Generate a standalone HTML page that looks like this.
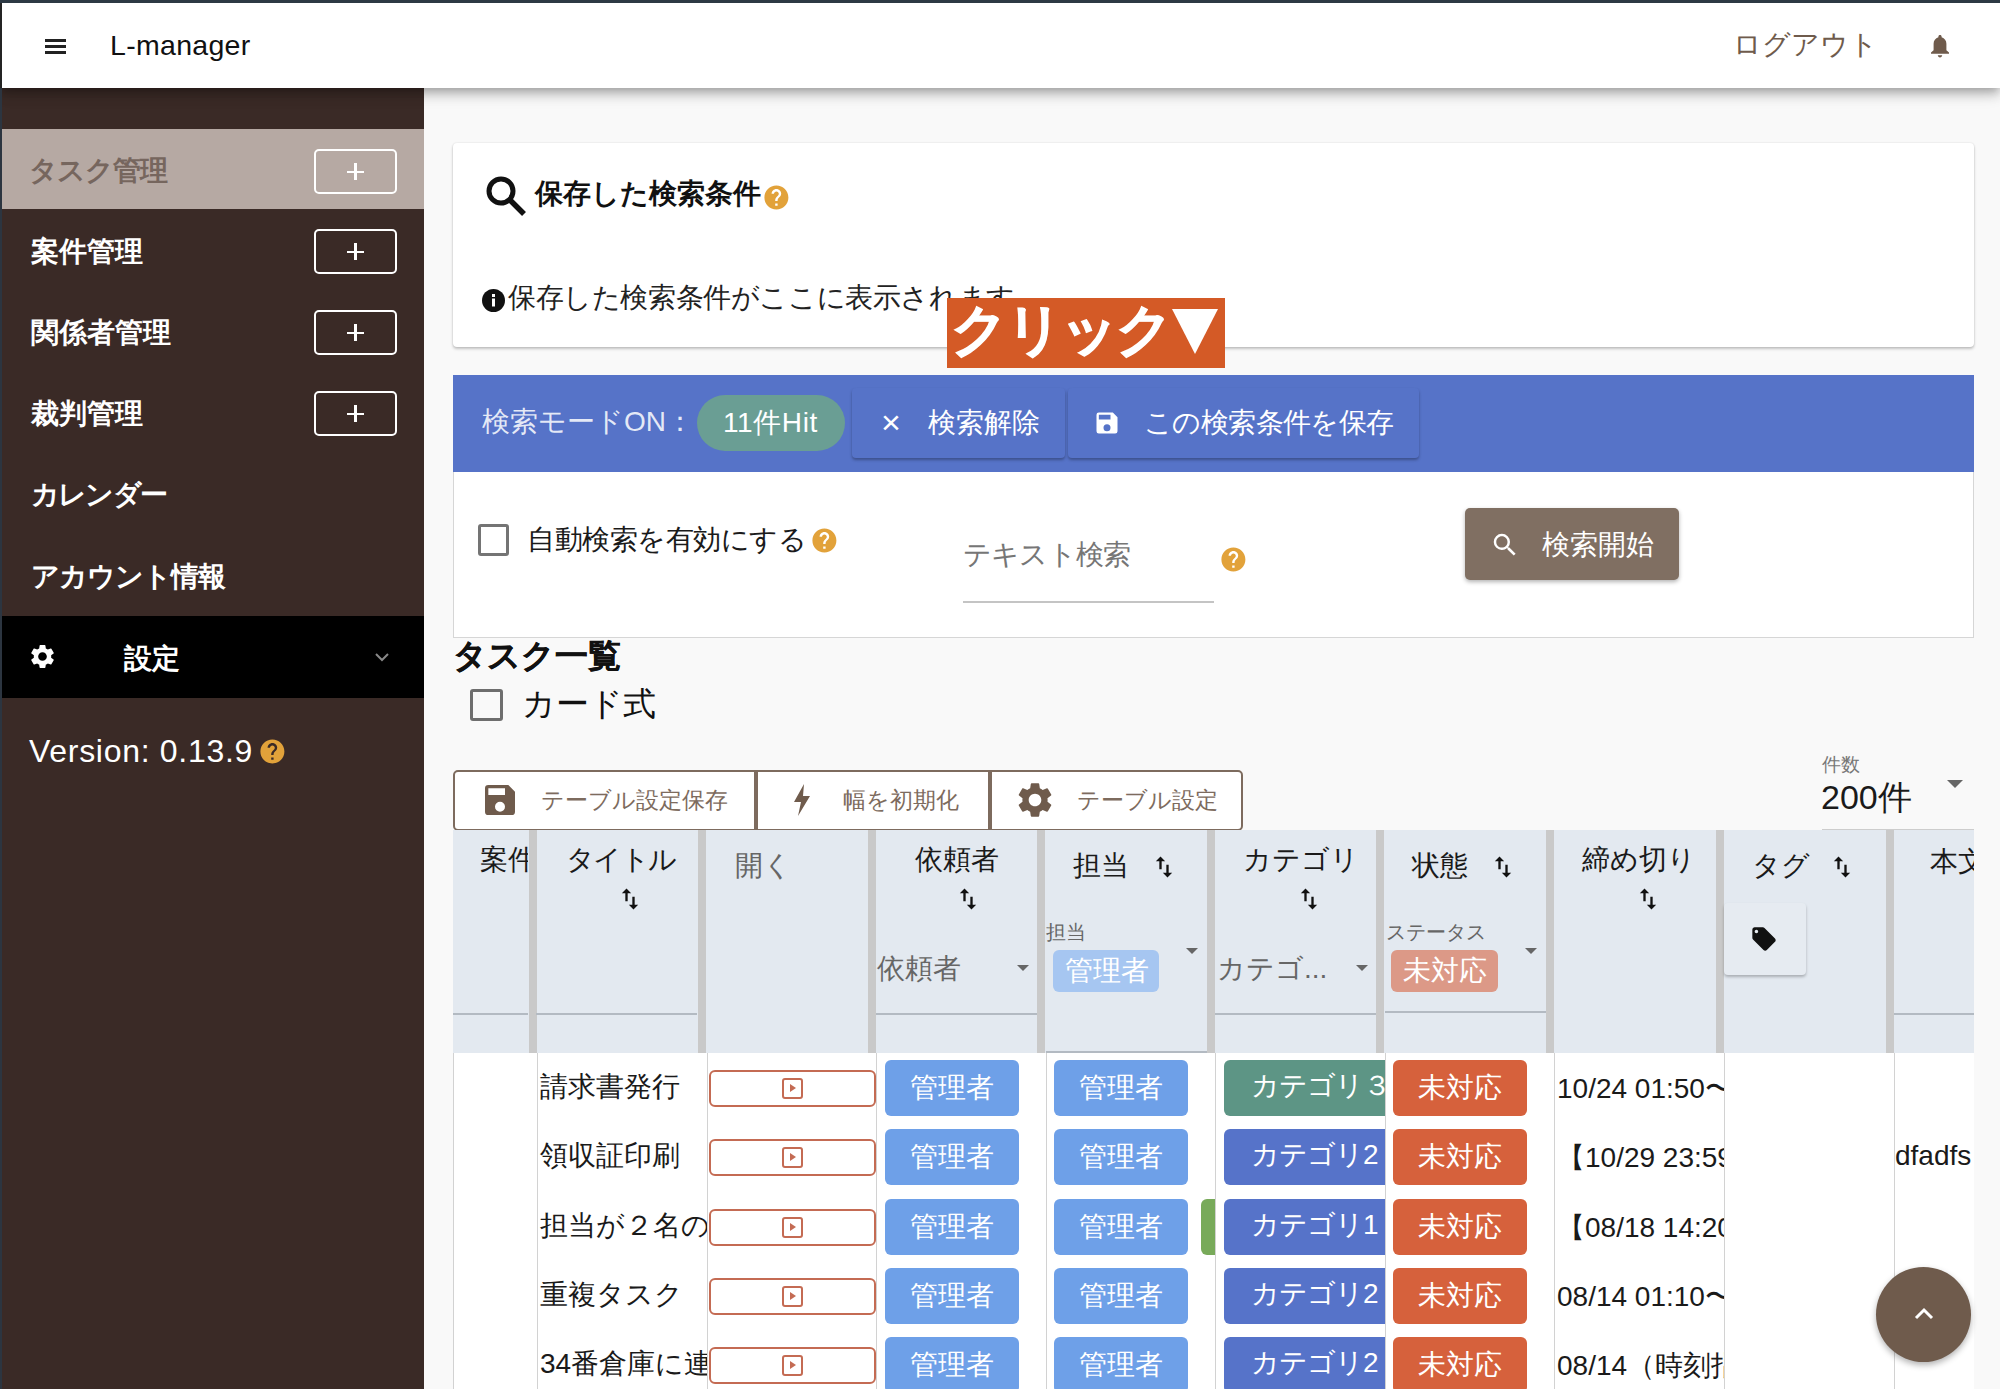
<!DOCTYPE html>
<html lang="ja">
<head>
<meta charset="utf-8">
<style>
*{box-sizing:border-box;margin:0;padding:0}
html,body{width:2000px;height:1389px;overflow:hidden}
body{position:relative;background:#f9f9f9;font-family:"Liberation Sans",sans-serif;color:#1a1a1a;font-size:28px}
.a{position:absolute}
.t{position:absolute;white-space:nowrap;line-height:1}
/* top frame */
#topline{left:0;top:0;width:2000px;height:3px;background:#2d3944;z-index:60}
#leftline{left:0;top:0;width:2px;height:1389px;background:linear-gradient(#242424 0,#242424 88px,#2c3540 88px);z-index:50}
#header{left:0;top:3px;width:2000px;height:85px;background:#fff;box-shadow:0 4px 8px -2px rgba(0,0,0,.2),0 8px 10px 0 rgba(0,0,0,.14),0 2px 20px 0 rgba(0,0,0,.12);z-index:20}
#sidebar{left:0;top:88px;width:424px;height:1301px;background:#3a2a26;z-index:10}
.nav{position:absolute;left:2px;width:422px;height:81px}
.nav .lbl{position:absolute;left:29px;top:1.5px;line-height:81px;font-size:27.5px;font-weight:bold;color:#fff;white-space:nowrap}
.plus{position:absolute;left:312px;top:20px;width:83px;height:45px;border:2px solid #fff;border-radius:5px}
.plus:before{content:"";position:absolute;left:31px;top:19.5px;width:17px;height:2.2px;background:#fff}
.plus:after{content:"";position:absolute;left:38.4px;top:12px;width:2.2px;height:17px;background:#fff}
.card{position:absolute;background:#fff}
.q{position:absolute;width:24px;height:24px;border-radius:50%;background:#e3a43a;color:#fff;font-size:18px;font-weight:bold;text-align:center;line-height:24px}

.tb{position:absolute;top:770px;height:61px;border:2px solid #7d6b5e;background:#fff}
.hdr{position:absolute;top:830px;height:223px;background:#e3e9f0}
.sep{position:absolute;top:830px;width:8px;height:223px;background:#c9c9c9}
.vl{position:absolute;top:1053px;width:1px;height:337px;background:#d2d2d2}
.sort{position:absolute}
.chip{position:absolute;height:56px;border-radius:6px;color:#fff;font-size:28px;line-height:55px;white-space:nowrap;overflow:hidden}
.obtn{position:absolute;left:709px;width:167px;height:37px;border:2px solid #c46b53;border-radius:6px;background:#fff}
.obtn i{position:absolute;left:71px;top:6px;width:21px;height:21px;border:2.5px solid #c46b53;border-radius:3px}
.obtn i:after{content:"";position:absolute;left:6px;top:4px;border-left:6px solid #c46b53;border-top:4.5px solid transparent;border-bottom:4.5px solid transparent}
.arr{position:absolute;width:0;height:0;border-left:6px solid transparent;border-right:6px solid transparent;border-top:6px solid #666}
</style>
</head>
<body>
<div id="topline" class="a"></div>
<div id="leftline" class="a"></div>
<div id="header" class="a">
  <!-- hamburger -->
  <div class="a" style="left:45px;top:36px;width:21px;height:3px;background:#222"></div>
  <div class="a" style="left:45px;top:42px;width:21px;height:3px;background:#222"></div>
  <div class="a" style="left:45px;top:48px;width:21px;height:3px;background:#222"></div>
  <div class="t" style="left:110px;top:28px;font-size:28.5px;color:#111;letter-spacing:0.3px">L-manager</div>
  <div class="t" style="left:1733px;top:28px;font-size:27.5px;color:#6f5b4c">ログアウト</div>
  <svg class="a" style="left:1928px;top:30px" width="24" height="26" viewBox="0 0 24 26"><path d="M12 2c-1 0-1.6.7-1.6 1.5v.7C7.4 5 5.6 7.6 5.6 10.8v6.4L3 19.6v1.2h18v-1.2l-2.6-2.4v-6.4c0-3.2-1.8-5.8-4.8-6.6v-.7C13.6 2.7 13 2 12 2zM9.8 22.2c0 1.2 1 2.2 2.2 2.2s2.2-1 2.2-2.2z" fill="#6f5b4c"/></svg>
</div>

<div id="sidebar" class="a">
  <div class="nav" style="top:41px;height:80px;background:#b6a9a3"><div class="lbl" style="left:27px;color:#76665e;line-height:80px;letter-spacing:-1px">タスク管理</div><div class="plus"></div></div>
  <div class="nav" style="top:121px"><div class="lbl">案件管理</div><div class="plus"></div></div>
  <div class="nav" style="top:202px"><div class="lbl">関係者管理</div><div class="plus"></div></div>
  <div class="nav" style="top:283px"><div class="lbl">裁判管理</div><div class="plus"></div></div>
  <div class="nav" style="top:364px"><div class="lbl" style="letter-spacing:-1.8px">カレンダー</div></div>
  <div class="nav" style="top:445px;height:83px"><div class="lbl" style="line-height:83px;letter-spacing:-1px">アカウント情報</div></div>
  <div class="nav" style="top:528px;height:82px;background:#000">
    <svg class="a" style="left:26px;top:26px" width="29" height="29" viewBox="0 0 24 24"><path d="M19.14 12.94c.04-.3.06-.61.06-.94 0-.32-.02-.64-.07-.94l2.03-1.58a.49.49 0 0 0 .12-.61l-1.92-3.32a.488.488 0 0 0-.59-.22l-2.39.96c-.5-.38-1.030-.7-1.62-.94l-.36-2.54a.484.484 0 0 0-.48-.41h-3.84c-.24 0-.43.17-.47.41l-.36 2.54c-.59.24-1.13.57-1.62.94l-2.39-.96c-.22-.08-.47 0-.59.22L2.74 8.87c-.12.21-.08.47.12.61l2.03 1.58c-.05.3-.09.63-.09.94s.02.64.07.94l-2.03 1.58a.49.49 0 0 0-.12.61l1.920 3.32c.12.22.37.29.59.22l2.39-.96c.5.38 1.03.7 1.62.94l.36 2.54c.05.24.24.41.48.41h3.84c.24 0 .44-.17.47-.41l.36-2.54c.59-.24 1.13-.56 1.62-.94l2.39.96c.22.08.47 0 .59-.22l1.92-3.32c.12-.22.07-.47-.12-.61l-2.01-1.58zM12 15.6c-1.98 0-3.6-1.62-3.6-3.6s1.62-3.6 3.6-3.6 3.6 1.62 3.6 3.6-1.62 3.6-3.6 3.6z" fill="#fff"/></svg>
    <div class="lbl" style="left:122px;line-height:82px">設定</div>
    <svg class="a" style="left:372px;top:35px" width="16" height="12" viewBox="0 0 16 12"><path d="M2 3l6 6 6-6" fill="none" stroke="#888" stroke-width="2"/></svg>
  </div>
  <div class="t" style="left:29px;top:647px;font-size:32px;color:#fff;letter-spacing:0.7px">Version: 0.13.9</div>
  <svg class="a" style="left:257.6px;top:648.6px" width="28.8" height="28.8" viewBox="0 0 24 24"><path d="M12 2C6.48 2 2 6.48 2 12s4.48 10 10 10 10-4.48 10-10S17.52 2 12 2zm1 17h-2v-2h2v2zm2.07-7.75l-.9.92C13.45 12.9 13 13.5 13 15h-2v-.5c0-1.1.45-2.1 1.17-2.83l1.24-1.26c.37-.36.59-.86.59-1.41 0-1.1-.9-2-2-2s-2 .9-2 2H8c0-2.21 1.79-4 4-4s4 1.79 4 4c0 .88-.36 1.68-.93 2.25z" fill="#e2a23a"/></svg>
</div>


<!-- MAIN -->
<div class="card" style="left:453px;top:143px;width:1521px;height:204px;border-radius:4px;box-shadow:0 2px 3px rgba(0,0,0,.22),0 0 2px rgba(0,0,0,.12)">
  <svg class="a" style="left:31px;top:32px" width="44" height="42" viewBox="0 0 44 42"><circle cx="17" cy="16" r="12" fill="none" stroke="#111" stroke-width="5"/><path d="M26 25L40 39" stroke="#111" stroke-width="5.5" stroke-linecap="butt"/></svg>
  <div class="t" style="left:82px;top:37px;font-size:27.5px;font-weight:bold;color:#111">保存した検索条件</div>
  <svg class="a" style="left:308.6px;top:39.6px" width="28.8" height="28.8" viewBox="0 0 24 24"><path d="M12 2C6.48 2 2 6.48 2 12s4.48 10 10 10 10-4.48 10-10S17.52 2 12 2zm1 17h-2v-2h2v2zm2.07-7.75l-.9.92C13.45 12.9 13 13.5 13 15h-2v-.5c0-1.1.45-2.1 1.17-2.83l1.24-1.26c.37-.36.59-.86.59-1.41 0-1.1-.9-2-2-2s-2 .9-2 2H8c0-2.21 1.79-4 4-4s4 1.79 4 4c0 .88-.36 1.68-.93 2.25z" fill="#e2a23a"/></svg>
  <svg class="a" style="left:29px;top:146px" width="23" height="23" viewBox="0 0 23 23"><circle cx="11.5" cy="11.5" r="11.5" fill="#111"/><rect x="10" y="5" width="3" height="3" fill="#fff"/><rect x="10" y="9.5" width="3" height="8" fill="#fff"/></svg>
  <div class="t" style="left:55px;top:141px;font-size:28px;color:#222;letter-spacing:-0.4px">保存した検索条件がここに表示されます</div>
</div>

<div class="a" style="left:947px;top:298px;width:278px;height:70px;background:#d45a26;z-index:30">
  <div class="t" style="left:4px;top:4px;font-size:56px;font-weight:bold;color:#fff;letter-spacing:-2px;-webkit-text-stroke:1.2px #fff">クリック</div>
  <svg class="a" style="left:225px;top:11px" width="46" height="46" viewBox="0 0 46 46"><path d="M0 0H46L23 45z" fill="#fff"/></svg>
</div>

<!-- blue bar -->
<div class="a" style="left:453px;top:375px;width:1521px;height:97px;background:#5673c8">
  <div class="t" style="left:29px;top:33px;font-size:28px;color:rgba(255,255,255,.85)">検索モードON：</div>
  <div class="a" style="left:244px;top:20px;width:148px;height:56px;border-radius:28px;background:#6a9e94"></div>
  <div class="t" style="left:270px;top:34px;font-size:28px;color:#fff;letter-spacing:0.6px">11件Hit</div>
  <div class="a" style="left:399px;top:13px;width:213px;height:70px;border-radius:4px;background:#5673c8;box-shadow:0 2px 3px rgba(0,0,0,.3)"></div>
  <div class="t" style="left:428px;top:30px;font-size:34px;color:#fff">×</div>
  <div class="t" style="left:475px;top:34px;font-size:28px;color:#fff">検索解除</div>
  <div class="a" style="left:615px;top:13px;width:351px;height:70px;border-radius:4px;background:#5673c8;box-shadow:0 2px 3px rgba(0,0,0,.3)"></div>
  <svg class="a" style="left:640px;top:34px" width="28" height="28" viewBox="0 0 24 24"><path d="M17 3H5a2 2 0 0 0-2 2v14a2 2 0 0 0 2 2h14a2 2 0 0 0 2-2V7l-4-4zm-5 16a3 3 0 1 1 0-6 3 3 0 0 1 0 6zm3-10H5V5h10v4z" fill="#fff"/></svg>
  <div class="t" style="left:691px;top:34px;font-size:28px;color:#fff;letter-spacing:-0.6px">この検索条件を保存</div>
</div>

<!-- search form card -->
<div class="card" style="left:453px;top:472px;width:1521px;height:166px;border:1px solid #d6d6d6;border-top:none">
  <div class="a" style="left:24px;top:52px;width:31px;height:32px;border:3px solid #747474;border-radius:3px"></div>
  <div class="t" style="left:73px;top:54px;font-size:28px;color:#1a1a1a;letter-spacing:-0.5px">自動検索を有効にする</div>
  <svg class="a" style="left:355.6px;top:53.6px" width="28.8" height="28.8" viewBox="0 0 24 24"><path d="M12 2C6.48 2 2 6.48 2 12s4.48 10 10 10 10-4.48 10-10S17.52 2 12 2zm1 17h-2v-2h2v2zm2.07-7.75l-.9.92C13.45 12.9 13 13.5 13 15h-2v-.5c0-1.1.45-2.1 1.17-2.83l1.24-1.26c.37-.36.59-.86.59-1.41 0-1.1-.9-2-2-2s-2 .9-2 2H8c0-2.21 1.79-4 4-4s4 1.79 4 4c0 .88-.36 1.68-.93 2.25z" fill="#e2a23a"/></svg>
  <div class="t" style="left:509px;top:69px;font-size:28px;color:#767676;letter-spacing:-0.8px">テキスト検索</div>
  <div class="a" style="left:509px;top:129px;width:251px;height:2px;background:#c4c4c4"></div>
  <svg class="a" style="left:764.6px;top:72.6px" width="28.8" height="28.8" viewBox="0 0 24 24"><path d="M12 2C6.48 2 2 6.48 2 12s4.48 10 10 10 10-4.48 10-10S17.52 2 12 2zm1 17h-2v-2h2v2zm2.07-7.75l-.9.92C13.45 12.9 13 13.5 13 15h-2v-.5c0-1.1.45-2.1 1.17-2.83l1.24-1.26c.37-.36.59-.86.59-1.41 0-1.1-.9-2-2-2s-2 .9-2 2H8c0-2.21 1.79-4 4-4s4 1.79 4 4c0 .88-.36 1.68-.93 2.25z" fill="#e2a23a"/></svg>
  <div class="a" style="left:1011px;top:36px;width:214px;height:72px;border-radius:5px;background:#806f62;box-shadow:0 2px 4px rgba(0,0,0,.3)"></div>
  <svg class="a" style="left:1036px;top:58px" width="30" height="30" viewBox="0 0 24 24"><path d="M15.5 14h-.79l-.28-.27A6.47 6.47 0 0 0 16 9.5 6.5 6.5 0 1 0 9.5 16c1.61 0 3.09-.59 4.23-1.57l.27.28v.79l5 4.99L20.49 19l-4.99-5zm-6 0C7.01 14 5 11.99 5 9.5S7.01 5 9.5 5 14 7.01 14 9.5 11.99 14 9.5 14z" fill="#fff"/></svg>
  <div class="t" style="left:1088px;top:59px;font-size:28px;color:#fff">検索開始</div>
</div>

<div class="t" style="left:453px;top:639px;font-size:33px;font-weight:bold;color:#111;-webkit-text-stroke:0.4px #111">タスク一覧</div>
<div class="a" style="left:470px;top:689px;width:33px;height:32px;border:3px solid #6e6e6e;border-radius:3px"></div>
<div class="t" style="left:522px;top:687px;font-size:33px;color:#111">カード式</div>

<!-- toolbar -->
<div class="tb" style="left:453px;width:303px;border-radius:5px 0 0 5px"></div>
<div class="tb" style="left:756px;width:234px;border-radius:0"></div>
<div class="tb" style="left:990px;width:253px;border-radius:0 5px 5px 0"></div>
<svg class="a" style="left:480px;top:780px" width="40" height="40" viewBox="0 0 24 24"><path d="M17 3H5a2 2 0 0 0-2 2v14a2 2 0 0 0 2 2h14a2 2 0 0 0 2-2V7l-4-4zm-5 16a3 3 0 1 1 0-6 3 3 0 0 1 0 6zm3-10H5V5h10v4z" fill="#6f5b4c"/></svg>
<div class="t" style="left:541px;top:789px;font-size:23px;color:#7d6b5e">テーブル設定保存</div>
<svg class="a" style="left:790px;top:783px" width="24" height="34" viewBox="0 0 24 34"><path d="M14 1L4 19h7l-3 14 12-20h-7z" fill="#6f5b4c"/></svg>
<div class="t" style="left:843px;top:789px;font-size:23px;color:#7d6b5e">幅を初期化</div>
<svg class="a" style="left:1014px;top:779px" width="42" height="42" viewBox="0 0 24 24"><path d="M19.14 12.94c.04-.3.06-.61.06-.94 0-.32-.02-.64-.07-.94l2.03-1.58a.49.49 0 0 0 .12-.61l-1.92-3.32a.488.488 0 0 0-.59-.22l-2.39.96c-.5-.38-1.03-.7-1.62-.94l-.36-2.54a.484.484 0 0 0-.48-.41h-3.84c-.24 0-.43.17-.47.41l-.36 2.54c-.59.24-1.13.57-1.62.94l-2.39-.96c-.22-.08-.47 0-.59.22L2.74 8.87c-.12.21-.08.47.12.61l2.03 1.58c-.05.3-.09.63-.09.94s.02.64.07.94l-2.03 1.58a.49.49 0 0 0-.12.61l1.92 3.32c.12.22.37.29.59.22l2.39-.96c.5.38 1.03.7 1.62.94l.36 2.54c.05.24.24.41.48.41h3.84c.24 0 .44-.17.47-.41l.36-2.54c.59-.24 1.13-.56 1.62-.94l2.39.96c.22.08.47 0 .59-.22l1.92-3.32c.12-.22.07-.47-.12-.61l-2.01-1.58zM12 15.6c-1.98 0-3.6-1.62-3.6-3.6s1.62-3.6 3.6-3.6 3.6 1.62 3.6 3.6-1.62 3.6-3.6 3.6z" fill="#6f5b4c"/></svg>
<div class="t" style="left:1077px;top:789px;font-size:23px;color:#7d6b5e">テーブル設定</div>

<div class="t" style="left:1822px;top:755px;font-size:19px;color:#777">件数</div>
<div class="t" style="left:1821px;top:780px;font-size:34px;color:#1a1a1a">200件</div>
<div class="arr" style="left:1947px;top:780px;border-left-width:8px;border-right-width:8px;border-top-width:8px"></div>
<div class="a" style="left:1822px;top:829px;width:152px;height:2px;background:#cdcdcd"></div>

<!-- table header -->
<div class="hdr" style="left:453px;width:1521px"></div>
<div class="sep" style="left:529px"></div>
<div class="sep" style="left:698px"></div>
<div class="sep" style="left:868px"></div>
<div class="sep" style="left:1037px"></div>
<div class="sep" style="left:1207px"></div>
<div class="sep" style="left:1376px"></div>
<div class="sep" style="left:1546px"></div>
<div class="sep" style="left:1716px"></div>
<div class="sep" style="left:1886px"></div>
<div class="a" style="left:453px;top:1013px;width:75px;height:2px;background:#b3bac2"></div>
<div class="a" style="left:536px;top:1013px;width:161px;height:2px;background:#b3bac2"></div>
<div class="a" style="left:876px;top:1013px;width:161px;height:2px;background:#b3bac2"></div>
<div class="a" style="left:1215px;top:1013px;width:161px;height:2px;background:#b3bac2"></div>
<div class="a" style="left:1385px;top:1011px;width:161px;height:2px;background:#b3bac2"></div>
<div class="a" style="left:1894px;top:1013px;width:80px;height:2px;background:#b3bac2"></div>
<div class="a" style="left:1046px;top:1051px;width:161px;height:2px;background:#b3bac2"></div>
<div class="a" style="left:453px;top:1053px;width:1521px;height:336px;background:#fff"></div>
<div class="vl" style="left:453px"></div>
<div class="vl" style="left:537px"></div>
<div class="vl" style="left:707px"></div>
<div class="vl" style="left:876px"></div>
<div class="vl" style="left:1046px"></div>
<div class="vl" style="left:1215px"></div>
<div class="vl" style="left:1385px"></div>
<div class="vl" style="left:1554px"></div>
<div class="vl" style="left:1724px"></div>
<div class="vl" style="left:1894px"></div>

<div class="a" style="left:453px;top:830px;width:75px;height:60px;overflow:hidden"><div class="t" style="left:27px;top:16px;font-size:28px">案件</div></div>
<div class="t" style="left:566px;top:846px;font-size:28px;letter-spacing:-1.6px">タイトル</div>
<svg class="sort" style="left:616px;top:885px" width="28" height="28" viewBox="0 0 24 24"><path d="M16 17.01V10h-2v7.01h-3L15 21l4-3.99h-3zM9 3L5 6.99h3V14h2V6.99h3L9 3z" fill="#111"/></svg>
<div class="t" style="left:735px;top:852px;font-size:28px;color:#666">開く</div>
<div class="t" style="left:915px;top:846px;font-size:28px">依頼者</div>
<svg class="sort" style="left:954px;top:885px" width="28" height="28" viewBox="0 0 24 24"><path d="M16 17.01V10h-2v7.01h-3L15 21l4-3.99h-3zM9 3L5 6.99h3V14h2V6.99h3L9 3z" fill="#111"/></svg>
<div class="t" style="left:877px;top:955px;font-size:28px;color:#666">依頼者</div>
<div class="arr" style="left:1017px;top:965px"></div>
<div class="t" style="left:1073px;top:852px;font-size:28px">担当</div>
<svg class="sort" style="left:1150px;top:853px" width="28" height="28" viewBox="0 0 24 24"><path d="M16 17.01V10h-2v7.01h-3L15 21l4-3.99h-3zM9 3L5 6.99h3V14h2V6.99h3L9 3z" fill="#111"/></svg>
<div class="t" style="left:1046px;top:922px;font-size:20px;color:#666">担当</div>
<div class="chip" style="left:1053px;top:950px;width:106px;height:42px;line-height:42px;background:#a6c6f1;border-radius:6px;padding-left:12px">管理者</div>
<div class="arr" style="left:1186px;top:948px"></div>
<div class="t" style="left:1243px;top:846px;font-size:28px">カテゴリ</div>
<svg class="sort" style="left:1295px;top:885px" width="28" height="28" viewBox="0 0 24 24"><path d="M16 17.01V10h-2v7.01h-3L15 21l4-3.99h-3zM9 3L5 6.99h3V14h2V6.99h3L9 3z" fill="#111"/></svg>
<div class="t" style="left:1217px;top:955px;font-size:28px;color:#666">カテゴ...</div>
<div class="arr" style="left:1356px;top:965px"></div>
<div class="t" style="left:1412px;top:852px;font-size:28px">状態</div>
<svg class="sort" style="left:1489px;top:853px" width="28" height="28" viewBox="0 0 24 24"><path d="M16 17.01V10h-2v7.01h-3L15 21l4-3.99h-3zM9 3L5 6.99h3V14h2V6.99h3L9 3z" fill="#111"/></svg>
<div class="t" style="left:1386px;top:922px;font-size:20px;color:#666">ステータス</div>
<div class="chip" style="left:1391px;top:950px;width:107px;height:42px;line-height:42px;background:#dc9987;border-radius:6px;padding-left:12px">未対応</div>
<div class="arr" style="left:1525px;top:948px"></div>
<div class="t" style="left:1582px;top:846px;font-size:28px">締め切り</div>
<svg class="sort" style="left:1634px;top:885px" width="28" height="28" viewBox="0 0 24 24"><path d="M16 17.01V10h-2v7.01h-3L15 21l4-3.99h-3zM9 3L5 6.99h3V14h2V6.99h3L9 3z" fill="#111"/></svg>
<div class="t" style="left:1752px;top:852px;font-size:28px">タグ</div>
<svg class="sort" style="left:1828px;top:853px" width="28" height="28" viewBox="0 0 24 24"><path d="M16 17.01V10h-2v7.01h-3L15 21l4-3.99h-3zM9 3L5 6.99h3V14h2V6.99h3L9 3z" fill="#111"/></svg>
<div class="a" style="left:1724px;top:903px;width:82px;height:72px;background:#e6ebf1;border-radius:4px;box-shadow:0 2px 3px rgba(0,0,0,.25)"></div>
<svg class="a" style="left:1750px;top:925px" width="28" height="28" viewBox="0 0 24 24"><path d="M21.41 11.58l-9-9C12.05 2.22 11.55 2 11 2H4c-1.1 0-2 .9-2 2v7c0 .55.22 1.05.59 1.42l9 9c.36.36.86.58 1.41.58.55 0 1.05-.22 1.41-.59l7-7c.37-.36.59-.86.59-1.41 0-.55-.23-1.06-.59-1.42zM5.5 7C4.67 7 4 6.33 4 5.5S4.67 4 5.5 4 7 4.67 7 5.5 6.33 7 5.5 7z" fill="#111"/></svg>
<div class="a" style="left:1894px;top:830px;width:80px;height:60px;overflow:hidden"><div class="t" style="left:36px;top:18px;font-size:28px">本文</div></div>
<div class="a" style="left:538px;top:1067px;width:169px;height:40px;overflow:hidden"><div class="t" style="left:2px;top:6px;font-size:28px">請求書発行</div></div>
<div class="obtn" style="top:1070px"><i></i></div>
<div class="chip" style="left:885px;top:1060px;width:134px;background:#6ea0e8;text-align:center">管理者</div>
<div class="chip" style="left:1054px;top:1060px;width:134px;background:#6ea0e8;text-align:center">管理者</div>
<div class="a" style="left:1224px;top:1060px;width:161px;height:56px;overflow:hidden"><div class="chip" style="left:0;top:0;width:175px;background:#5d9585;padding-left:27px;line-height:51px;letter-spacing:-1px">カテゴリ３</div></div>
<div class="chip" style="left:1393px;top:1060px;width:134px;background:#d6613c;text-align:center">未対応</div>
<div class="a" style="left:1555px;top:1067px;width:169px;height:40px;overflow:hidden"><div class="t" style="left:2px;top:7.5px;font-size:28px">10/24 01:50〜</div></div>
<div class="a" style="left:538px;top:1136px;width:169px;height:40px;overflow:hidden"><div class="t" style="left:2px;top:6px;font-size:28px">領収証印刷</div></div>
<div class="obtn" style="top:1139px"><i></i></div>
<div class="chip" style="left:885px;top:1129px;width:134px;background:#6ea0e8;text-align:center">管理者</div>
<div class="chip" style="left:1054px;top:1129px;width:134px;background:#6ea0e8;text-align:center">管理者</div>
<div class="a" style="left:1224px;top:1129px;width:161px;height:56px;overflow:hidden"><div class="chip" style="left:0;top:0;width:175px;background:#5673c9;padding-left:27px;line-height:51px;letter-spacing:-1px">カテゴリ2</div></div>
<div class="chip" style="left:1393px;top:1129px;width:134px;background:#d6613c;text-align:center">未対応</div>
<div class="a" style="left:1555px;top:1136px;width:169px;height:40px;overflow:hidden"><div class="t" style="left:2px;top:7.5px;font-size:28px">【10/29 23:59</div></div>
<div class="t" style="left:1895px;top:1142px;font-size:28px">dfadfs</div>
<div class="a" style="left:538px;top:1206px;width:169px;height:40px;overflow:hidden"><div class="t" style="left:2px;top:6px;font-size:28px">担当が２名の</div></div>
<div class="obtn" style="top:1209px"><i></i></div>
<div class="chip" style="left:885px;top:1199px;width:134px;background:#6ea0e8;text-align:center">管理者</div>
<div class="chip" style="left:1054px;top:1199px;width:134px;background:#6ea0e8;text-align:center">管理者</div>
<div class="chip" style="left:1201px;top:1199px;width:14px;background:#78aa5a;border-radius:6px 0 0 6px"></div>
<div class="a" style="left:1224px;top:1199px;width:161px;height:56px;overflow:hidden"><div class="chip" style="left:0;top:0;width:175px;background:#5673c9;padding-left:27px;line-height:51px;letter-spacing:-1px">カテゴリ1</div></div>
<div class="chip" style="left:1393px;top:1199px;width:134px;background:#d6613c;text-align:center">未対応</div>
<div class="a" style="left:1555px;top:1206px;width:169px;height:40px;overflow:hidden"><div class="t" style="left:2px;top:7.5px;font-size:28px">【08/18 14:20</div></div>
<div class="a" style="left:538px;top:1275px;width:169px;height:40px;overflow:hidden"><div class="t" style="left:2px;top:6px;font-size:28px">重複タスク</div></div>
<div class="obtn" style="top:1278px"><i></i></div>
<div class="chip" style="left:885px;top:1268px;width:134px;background:#6ea0e8;text-align:center">管理者</div>
<div class="chip" style="left:1054px;top:1268px;width:134px;background:#6ea0e8;text-align:center">管理者</div>
<div class="a" style="left:1224px;top:1268px;width:161px;height:56px;overflow:hidden"><div class="chip" style="left:0;top:0;width:175px;background:#5673c9;padding-left:27px;line-height:51px;letter-spacing:-1px">カテゴリ2</div></div>
<div class="chip" style="left:1393px;top:1268px;width:134px;background:#d6613c;text-align:center">未対応</div>
<div class="a" style="left:1555px;top:1275px;width:169px;height:40px;overflow:hidden"><div class="t" style="left:2px;top:7.5px;font-size:28px">08/14 01:10〜</div></div>
<div class="a" style="left:538px;top:1344px;width:169px;height:40px;overflow:hidden"><div class="t" style="left:2px;top:6px;font-size:28px">34番倉庫に連絡</div></div>
<div class="obtn" style="top:1347px"><i></i></div>
<div class="chip" style="left:885px;top:1337px;width:134px;background:#6ea0e8;text-align:center">管理者</div>
<div class="chip" style="left:1054px;top:1337px;width:134px;background:#6ea0e8;text-align:center">管理者</div>
<div class="a" style="left:1224px;top:1337px;width:161px;height:56px;overflow:hidden"><div class="chip" style="left:0;top:0;width:175px;background:#5673c9;padding-left:27px;line-height:51px;letter-spacing:-1px">カテゴリ2</div></div>
<div class="chip" style="left:1393px;top:1337px;width:134px;background:#d6613c;text-align:center">未対応</div>
<div class="a" style="left:1555px;top:1344px;width:169px;height:40px;overflow:hidden"><div class="t" style="left:2px;top:7.5px;font-size:28px">08/14（時刻指定</div></div>

<div class="a" style="left:1876px;top:1267px;width:95px;height:95px;border-radius:50%;background:#6f5b4c;box-shadow:0 3px 6px rgba(0,0,0,.3)"></div>
<svg class="a" style="left:1912px;top:1302px" width="24" height="24" viewBox="0 0 24 24"><path d="M4 16L12 8l8 8" fill="none" stroke="#fff" stroke-width="3"/></svg>

</body>
</html>
